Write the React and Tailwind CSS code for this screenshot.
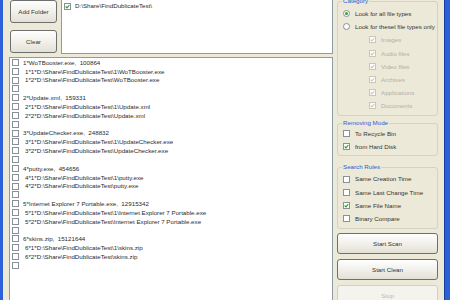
import React from 'react'

const groups = [
  ['1*WoTBooster.exe,  100864', 'WoTBooster.exe'],
  ['2*Update.xml,  159331', 'Update.xml'],
  ['3*UpdateChecker.exe,  248832', 'UpdateChecker.exe'],
  ['4*putty.exe,  454656', 'putty.exe'],
  ['5*Internet Explorer 7 Portable.exe,  12915342', 'Internet Explorer 7 Portable.exe'],
  ['6*skins.zip,  15121644', 'skins.zip'],
]

function Check({ checked, disabled }) {
  return (
    <span
      className={`flex h-[7px] w-[7px] shrink-0 items-center justify-center border bg-white ${
        disabled ? 'border-[#cac7b8]' : 'border-[#8a8f99]'
      }`}
    >
      {checked && (
        <svg viewBox="0 0 6 6" className="h-[5px] w-[5px]">
          <path d="M0.8 3 L2.4 4.6 L5.2 1.2" fill="none" stroke={disabled ? '#cac7b8' : '#21a121'} strokeWidth="1.3" />
        </svg>
      )}
    </span>
  )
}

function Radio({ on }) {
  return (
    <span className="flex h-[7px] w-[7px] shrink-0 items-center justify-center rounded-full border border-[#8a8f99] bg-white">
      {on && <span className="h-[3px] w-[3px] rounded-full bg-[#2fa52f]" />}
    </span>
  )
}

function Group({ title, className, children }) {
  return (
    <div className={`relative rounded-[3px] border border-[#d5d2c2] pl-[5px] ${className}`}>
      <span className="absolute -top-[5px] left-[4px] bg-[#ece9d8] px-[1px] leading-[8px] text-[#2a5bd7]">{title}</span>
      {children}
    </div>
  )
}

function Option({ children, checked, disabled, radio, on, sub, h = 'h-[13.2px]' }) {
  return (
    <div className={`flex items-center gap-[5px] ${h} ${sub ? 'pl-[26px]' : ''}`}>
      {radio ? <Radio on={on} /> : <Check checked={checked} disabled={disabled} />}
      <span className={`whitespace-nowrap ${disabled ? 'text-[#b3b0a2]' : 'text-[#333]'}`}>{children}</span>
    </div>
  )
}

function Button({ children, className = '', disabled }) {
  return (
    <div
      className={`flex items-center justify-center rounded-[3px] border bg-linear-to-b ${
        disabled
          ? 'border-[#d3d0c2] from-[#f4f3ee] to-[#f4f3ee] text-[#bdbaae]'
          : 'border-[#6f6f6f] from-white to-[#e3e1d6] text-[#333]'
      } ${className}`}
    >
      {children}
    </div>
  )
}

function Row({ text, sub }) {
  return (
    <div className="flex h-[8.83px] items-center gap-[4px] pl-[2px]">
      <Check />
      <span className={`whitespace-pre text-[#2b2b2b] ${sub ? 'pl-[2px]' : ''}`}>{text}</span>
    </div>
  )
}

export default function App() {
  const base = 'D:\\Share\\FindDublicateTest\\'
  return (
    <div className="flex h-[300px] w-[450px] overflow-hidden bg-[#ece9d8] font-['Liberation_Sans',Arial,sans-serif] text-[6.2px]">
      <div className="w-[3px] shrink-0 bg-[#2d5fd8]" />

      <div className="flex w-[330px] shrink-0 flex-col pl-[6px]">
        <div className="flex h-[54px] shrink-0 items-start gap-[4px] pl-[1px]">
          <div className="flex w-[47px] flex-col gap-[7px]">
            <Button className="h-[23px]">Add Folder</Button>
            <Button className="h-[23px]">Clear</Button>
          </div>
          <div className="-mt-[1px] h-[55px] flex-1 border border-[#8e9aa8] bg-white pl-[2px] pt-[2px]">
            <div className="flex h-[8px] items-center gap-[4px]">
              <Check checked />
              <span className="text-[#2b2b2b]">{base}</span>
            </div>
          </div>
        </div>

        <div className="mt-[3px] h-[260px] shrink-0 border border-[#8e9aa8] bg-white pt-[0px]">
          {groups.map(([head, file], i) => (
            <React.Fragment key={head}>
              <Row text={head} />
              <Row sub text={`${i + 1}*1*${base}1\\${file}`} />
              <Row sub text={`${i + 1}*2*${base}${file}`} />
              <Row text="" />
            </React.Fragment>
          ))}
        </div>
      </div>

      <div className="ml-[4px] flex w-[101px] shrink-0 flex-col">
        <Group title="Category" className="mt-[1px] pb-[2px] pt-[5px]">
          <Option radio on>Look for all file types</Option>
          <Option radio>Look for thesel file types only</Option>
          <Option sub checked disabled>Images</Option>
          <Option sub checked disabled>Audio files</Option>
          <Option sub checked disabled>Video files</Option>
          <Option sub checked disabled>Archives</Option>
          <Option sub checked disabled>Applications</Option>
          <Option sub checked disabled>Documents</Option>
        </Group>

        <Group title="Removing Mode" className="mt-[7px] pb-[1px] pt-[3px]">
          <Option h="h-[13.5px]">To Recycle Bin</Option>
          <Option h="h-[13.5px]" checked>from Hard Disk</Option>
        </Group>

        <Group title="Search Rules" className="mt-[11px] pb-[3px] pt-[5px]">
          <Option>Same Creation Time</Option>
          <Option>Same Last Change Time</Option>
          <Option checked>Same File Name</Option>
          <Option>Binary Compare</Option>
        </Group>

        <Button className="mt-[4px] h-[21px] shrink-0">Start Scan</Button>
        <Button className="mt-[5px] h-[21px] shrink-0">Start Clean</Button>
        <Button disabled className="mt-[5px] h-[21px] shrink-0">Stop</Button>
      </div>

      <div className="flex-1" />
      <div className="w-[6px] shrink-0 border-l border-[#163f9c] bg-[#2d5fd8]" />
    </div>
  )
}
